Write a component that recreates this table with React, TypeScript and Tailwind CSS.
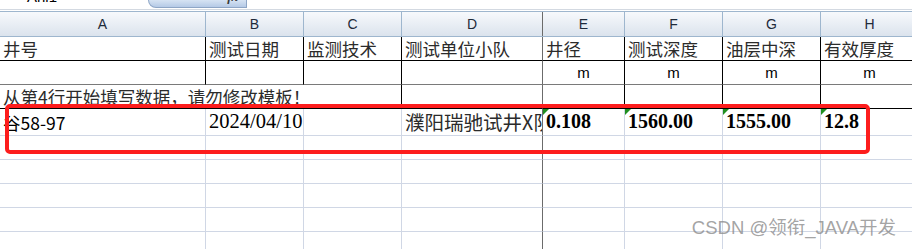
const cols = [
  "w-[206px]",
  "w-[98px]",
  "w-[98px]",
  "w-[141px]",
  "w-[82px]",
  "w-[98px]",
  "w-[98px]",
  "w-[98px]",
];

const letters = ["A", "B", "C", "D", "E", "F", "G", "H"];
const titles = ["井号", "测试日期", "监测技术", "测试单位小队", "井径", "测试深度", "油层中深", "有效厚度"];
const units = ["", "", "", "", "m", "m", "m", "m"];

const cjk = "font-['Noto_Sans_CJK_SC','Noto_Sans',sans-serif]";

// right border of a column: D carries the frozen pane line
function edge(i: number, color: string) {
  if (i === 3) return "border-r border-r-[#6b6b6b]";
  return color;
}

function TopStrip() {
  return (
    <div className="flex h-[9px] overflow-hidden bg-white">
      <div className="w-[148px] pl-[27px] overflow-hidden">
        <div className="-mt-[11px] text-[15px] leading-none font-['Liberation_Sans',sans-serif] text-black">
          Anl1
        </div>
      </div>
      <div className="w-[99px] h-[8px] flex justify-end overflow-hidden rounded-bl-[8px] border-l border-b border-r border-[#8ea6c6] bg-gradient-to-b from-[#d6e3f3] to-[#b5cae6] pr-[8px]">
        <span className="-mt-[10px] text-[13px] leading-none italic font-bold font-['Liberation_Serif',serif] text-[#3a3a3a]">
          fx
        </span>
      </div>
    </div>
  );
}

function ColumnHeader() {
  return (
    <div className="flex h-[26px] border-t border-t-[#9eb6ce] border-b border-b-[#9eb6ce] bg-gradient-to-b from-[#f7f9fc] to-[#dbe3ed]">
      {letters.map((l, i) => (
        <div
          key={l}
          className={`${cols[i]} shrink-0 flex items-center justify-center text-[14px] text-[#1e2a3a] font-['Liberation_Sans',sans-serif] ${edge(i, "border-r border-r-[#9eb6ce]")}`}
        >
          {l}
        </div>
      ))}
    </div>
  );
}

function TitleRow() {
  return (
    <div className="flex h-[24px]">
      {titles.map((t, i) => (
        <div
          key={t}
          className={`${cols[i]} shrink-0 flex items-center pl-[3px] overflow-hidden whitespace-nowrap border-b border-b-black text-[17.5px] leading-none text-[#2b2b2b] ${cjk} ${edge(i, "border-r border-r-black")}`}
        >
          {t}
        </div>
      ))}
    </div>
  );
}

function UnitRow() {
  return (
    <div className="flex h-[24px]">
      {units.map((u, i) => (
        <div
          key={i}
          className={`${cols[i]} shrink-0 flex items-center justify-center border-b border-b-[#7a7a7a] text-[15px] leading-none text-black font-['Liberation_Sans',sans-serif] ${edge(i, "border-r border-r-black")}`}
        >
          {u}
        </div>
      ))}
    </div>
  );
}

function NoteRow() {
  return (
    <div className="flex h-[24px]">
      <div className={`w-[402px] shrink-0 flex items-center pl-[3px] whitespace-nowrap border-b border-b-black border-r border-r-black text-[17.5px] leading-none text-[#2b2b2b] ${cjk}`}>
        从第4行开始填写数据，请勿修改模板！
      </div>
      {[3, 4, 5, 6, 7].map((i) => (
        <div
          key={i}
          className={`${cols[i]} shrink-0 border-b border-b-black ${edge(i, "border-r border-r-black")}`}
        />
      ))}
    </div>
  );
}

function Flag() {
  return (
    <span className="absolute top-0 left-0 w-0 h-0 border-t-[6px] border-r-[6px] border-t-[#1f8f1f] border-r-transparent" />
  );
}

function DataRow() {
  const base = "shrink-0 relative flex items-end pb-[4px] pl-[3px] overflow-hidden whitespace-nowrap border-b border-b-[#d0d7e5]";
  const num = "text-[20px] leading-none font-bold text-black font-['Liberation_Serif',serif]";
  return (
    <div className="flex h-[27px]">
      <div className={`${cols[0]} ${base} border-r border-r-[#d0d7e5] text-[17.5px] leading-none text-black ${cjk}`}>谷58-97</div>
      <div className={`${cols[1]} ${base} border-r border-r-[#d0d7e5] text-[20.5px] leading-none text-black font-['Liberation_Serif',serif]`}>2024/04/10</div>
      <div className={`${cols[2]} ${base} border-r border-r-[#d0d7e5]`} />
      <div className={`${cols[3]} ${base} border-r border-r-[#6b6b6b] text-[19.5px] leading-none text-[#2b2b2b] ${cjk}`}>濮阳瑞驰试井X队</div>
      <div className={`${cols[4]} ${base} border-r border-r-[#d0d7e5] ${num}`}><Flag />0.108</div>
      <div className={`${cols[5]} ${base} border-r border-r-[#d0d7e5] ${num}`}><Flag />1560.00</div>
      <div className={`${cols[6]} ${base} border-r border-r-[#d0d7e5] ${num}`}><Flag />1555.00</div>
      <div className={`${cols[7]} ${base} border-r border-r-[#d0d7e5] ${num}`}><Flag />12.8</div>
    </div>
  );
}

function EmptyRow() {
  return (
    <div className="flex h-[24px]">
      {cols.map((c, i) => (
        <div key={i} className={`${c} shrink-0 border-b border-b-[#d0d7e5] ${edge(i, "border-r border-r-[#d0d7e5]")}`} />
      ))}
    </div>
  );
}

export default function App() {
  return (
    <div className="relative w-[912px] h-[249px] overflow-hidden bg-white">
      <TopStrip />
      <div className="h-[2px] border-t border-t-[#d3d9e1] bg-white" />
      <ColumnHeader />
      <TitleRow />
      <UnitRow />
      <NoteRow />
      <DataRow />
      {[0, 1, 2, 3, 4].map((r) => (
        <EmptyRow key={r} />
      ))}

      {/* highlight around the first data row */}
      <div className="absolute left-[5px] top-[104px] w-[865px] h-[50px] rounded-[5px] border-4 border-[#fd1d1d]" />

      <div className="absolute right-[16px] top-[219px] text-[18.5px] leading-none text-[#8c8c8c]/80 font-['Liberation_Sans','Noto_Sans_CJK_SC',sans-serif]">
        CSDN @领衔_JAVA开发
      </div>
    </div>
  );
}
